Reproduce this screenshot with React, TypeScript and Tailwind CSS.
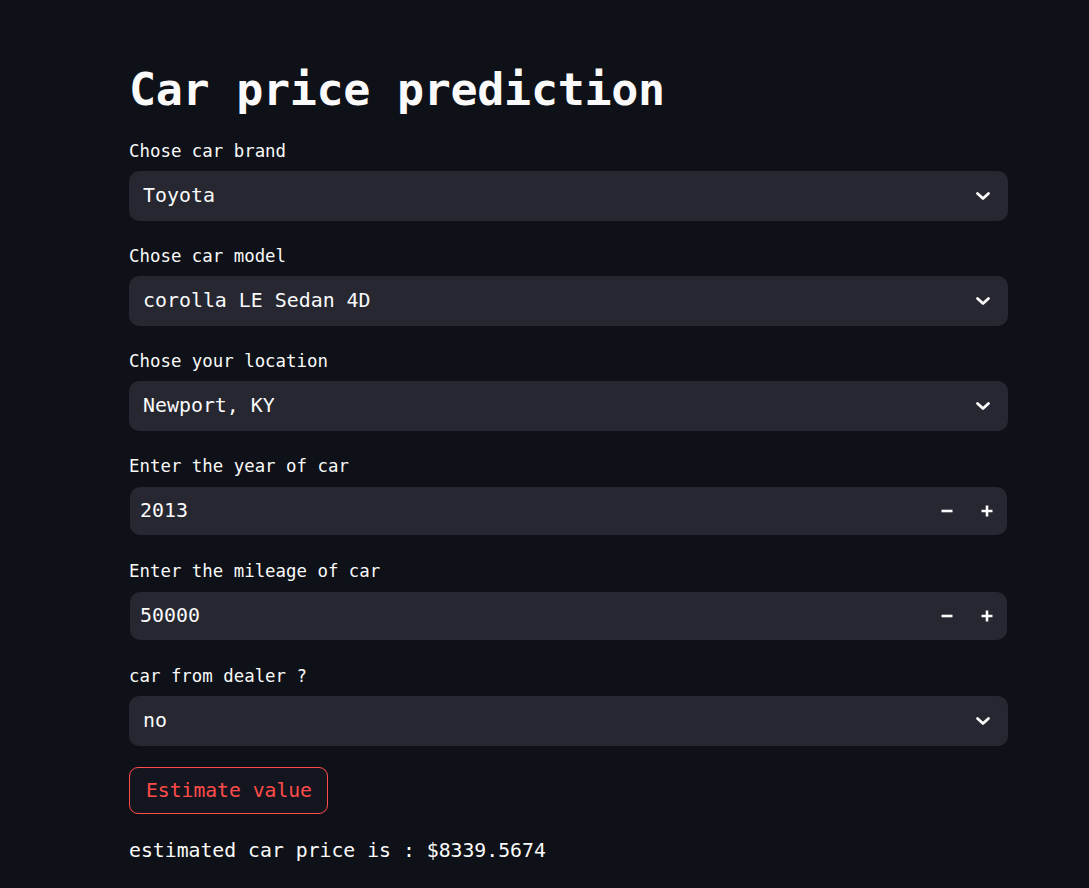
import { useState } from "react";

const mono = { fontFamily: '"DejaVu Sans Mono", "Liberation Mono", monospace' };

function Chevron() {
  return (
    <svg width="16" height="16" viewBox="0 0 16 16" className="text-[#fafafa]">
      <path d="M2.5 5.5l5.5 5 5.5-5" fill="none" stroke="currentColor" strokeWidth="2.8" strokeLinecap="round" strokeLinejoin="round" />
    </svg>
  );
}

function SelectBox({ label, value }: { label: string; value: string }) {
  return (
    <div className="flex flex-col mb-[21px]">
      <label className="h-[28px] leading-[28px] text-[17.4px] text-[#fafafa] mb-[6px]">{label}</label>
      <div className="h-[50px] rounded-[10px] bg-[#262730] flex items-center justify-between pl-[14px] pr-[17px]">
        <span className="text-[19.9px] text-[#fafafa]">{value}</span>
        <Chevron />
      </div>
    </div>
  );
}

function NumberBox({ label, value }: { label: string; value: string }) {
  return (
    <div className="flex flex-col mb-[22px]">
      <label className="h-[28px] leading-[28px] text-[17.4px] text-[#fafafa] mb-[7px]">{label}</label>
      <div className="h-[48px] rounded-[10px] bg-[#262730] flex items-center ml-px mr-px">
        <span className="flex-1 pl-[10px] text-[19.9px] text-[#fafafa]">{value}</span>
        <button className="w-[40px] h-full flex items-center justify-center text-[#fafafa]">
          <svg width="12" height="12" viewBox="0 0 12 12">
            <path d="M0.5 6h11" stroke="currentColor" strokeWidth="2.6" />
          </svg>
        </button>
        <button className="w-[40px] h-full flex items-center justify-center text-[#fafafa]">
          <svg width="12" height="12" viewBox="0 0 12 12">
            <path d="M0.5 6h11M6 0.5v11" stroke="currentColor" strokeWidth="2.6" />
          </svg>
        </button>
      </div>
    </div>
  );
}

export default function App() {
  const [shown] = useState(true);

  return (
    <div className="min-h-[888px] bg-[#0e1117] text-[#fafafa]" style={mono}>
      <div className="ml-[129px] w-[879px] pt-[63px] flex flex-col">
        <h1 className="text-[45px] leading-[54px] font-bold tracking-[-0.3px] mb-[20px]">Car price prediction</h1>
        <SelectBox label="Chose car brand" value="Toyota" />
        <SelectBox label="Chose car model" value="corolla LE Sedan 4D" />
        <SelectBox label="Chose your location" value="Newport, KY" />
        <NumberBox label="Enter the year of car" value="2013" />
        <NumberBox label="Enter the mileage of car" value="50000" />
        <SelectBox label="car from dealer ?" value="no" />
        <div>
          <button className="h-[47px] pl-4 pr-[15px] rounded-[9px] border border-[#ff4b4b] bg-[#13161e] text-[19.7px] text-[#ff4b4b]">
            Estimate value
          </button>
        </div>
        {shown && (
          <p className="mt-[21px] text-[19.8px] leading-[32px] text-[#fafafa]">estimated car price is : $8339.5674</p>
        )}
      </div>
    </div>
  );
}
